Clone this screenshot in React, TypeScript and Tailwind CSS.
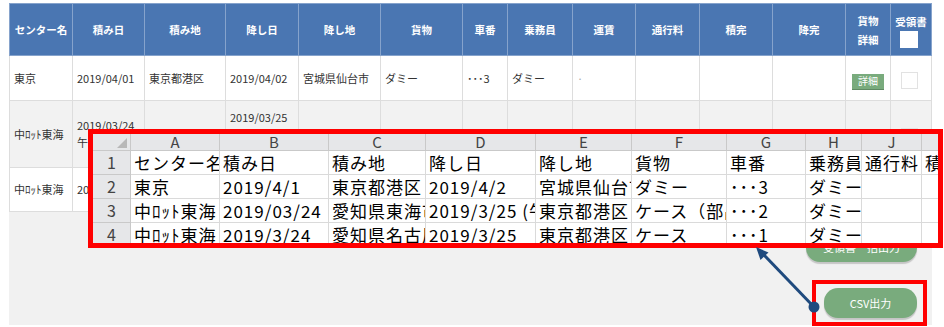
import React from 'react';

const cols = [63, 72, 81, 73, 82, 82, 45, 65, 63, 64, 73, 73, 45, 41];
const headers = ['センター名', '積み日', '積み地', '降し日', '降し地', '貨物', '車番', '乗務員', '運賃', '通行料', '積完', '降完'];

type Row = { h: string; bg: string; cells: string[] };
const rows: Row[] = [
  {
    h: 'h-[45px]',
    bg: 'bg-white',
    cells: ['東京', '2019/04/01', '東京都港区', '2019/04/02', '宮城県仙台市', 'ダミー', '･･･3', 'ダミー', '·', '', '', ''],
  },
  {
    h: 'h-[67px]',
    bg: 'bg-[#f2f2f2]',
    cells: ['中ﾛｯﾄ東海', '2019/03/24\n午前', '愛知県東海市', '2019/03/25\n午前9時\n指定', '東京都港区', 'ケース（部品）', '･･･2', 'ダミー', '10,000円', '', '', ''],
  },
  {
    h: 'h-[44px]',
    bg: 'bg-white',
    cells: ['中ﾛｯﾄ東海', '2019/03/24', '愛知県名古屋市', '2019/03/25', '東京都港区', 'ケース', '･･･1', 'ダミー', '', '', '', ''],
  },
];

const letters = ['', 'A', 'B', 'C', 'D', 'E', 'F', 'G', 'H', 'J', 'K'];
const xrows: string[][] = [
  ['センター名', '積み日', '積み地', '降し日', '降し地', '貨物', '車番', '乗務員', '通行料', '積完'],
  ['東京', '2019/4/1', '東京都港区', '2019/4/2', '宮城県仙台市', 'ダミー', '･･･3', 'ダミー', '', ''],
  ['中ﾛｯﾄ東海', '2019/03/24', '愛知県東海市', '2019/3/25 (午前)', '東京都港区', 'ケース（部品）', '･･･2', 'ダミー', '', ''],
  ['中ﾛｯﾄ東海', '2019/3/24', '愛知県名古屋市', '2019/3/25', '東京都港区', 'ケース', '･･･1', 'ダミー', '', ''],
];

function DetailButton() {
  return (
    <span className="inline-flex h-[15px] w-[32px] items-center justify-center bg-[#79ab7d] text-[10px] leading-none text-white shadow-[0_1px_0_#5f8a63]">
      詳細
    </span>
  );
}

function Check() {
  return <span className="inline-block h-[17px] w-[17px] border border-[#e2e2e2] bg-white align-middle" />;
}

function ExcelOverlay() {
  return (
    <div className="absolute left-[88px] top-[129px] h-[119px] w-[855px] border-[5px] border-[#ff0000] bg-white">
      <div
        className="h-full w-full overflow-hidden"
        style={{ fontFamily: '"Noto Sans CJK JP", "Noto Sans", sans-serif' }}
      >
        <div className="grid w-max grid-cols-[38px_89px_109px_97px_110px_96px_95px_79px_56px_60px_60px] grid-rows-[17px_24px_24px_24px_24px]">
          {letters.map((l, i) => (
            <div
              key={'h' + i}
              className="relative border-b border-r border-[#c9c9c9] bg-[#e6e7e9] text-center text-[15px] leading-[16px] text-[#444]"
            >
              {i === 0 ? (
                <span className="absolute bottom-[2px] right-[3px] h-0 w-0 border-b-[10px] border-l-[10px] border-b-[#b8b8b8] border-l-transparent" />
              ) : (
                l
              )}
            </div>
          ))}
          {xrows.map((r, ri) => (
            <React.Fragment key={'r' + ri}>
              <div className="border-b border-r border-[#c9c9c9] bg-[#e6e7e9] text-center text-[16px] leading-[23px] text-[#444]">
                {ri + 1}
              </div>
              {r.map((c, ci) => (
                <div
                  key={ci}
                  className="overflow-hidden whitespace-nowrap border-b border-r border-[#dadada] pl-[3px] text-[17px] leading-[23px] tracking-[1px] text-black"
                >
                  {c}
                </div>
              ))}
            </React.Fragment>
          ))}
        </div>
      </div>
    </div>
  );
}

export default function App() {
  return (
    <div
      className="relative h-[327px] w-[944px] overflow-hidden bg-white"
      style={{ fontFamily: '"Noto Sans CJK JP", "Noto Sans", sans-serif' }}
    >
      <div className="ml-[9px] mt-[3px] flex h-[322px] w-[923px] flex-col bg-[#f1f1f1]">
        <table className="w-[922px] table-fixed border-collapse">
          <colgroup>
            {cols.map((w, i) => (
              <col key={i} style={{ width: w }} />
            ))}
          </colgroup>
          <thead>
            <tr className="h-[52px] bg-[#4a76b2]">
              {headers.map((h) => (
                <th
                  key={h}
                  className="border border-[#86a3cc] px-0 text-center text-[10.5px] font-bold text-white"
                >
                  {h}
                </th>
              ))}
              <th className="border border-[#86a3cc] px-0 text-center text-[10.5px] font-bold leading-[19px] text-white">
                貨物
                <br />
                詳細
              </th>
              <th className="border border-[#86a3cc] px-0 pt-[2px] text-center align-middle text-[10.5px] font-bold leading-[17px] text-white">
                <div>受領書</div>
                <div className="flex justify-center">
                  <span className="mr-[4px] mt-[1px] block h-[17px] w-[18px] bg-white" />
                </div>
              </th>
            </tr>
          </thead>
          <tbody>
            {rows.map((r, ri) => (
              <tr key={ri} className={`${r.h} ${r.bg}`}>
                {r.cells.map((c, ci) => (
                  <td
                    key={ci}
                    className={`border border-[#dddddd] px-[4px] align-middle text-[11px] leading-[17px] whitespace-pre-line ${
                      c === '·' ? 'text-[#aaa]' : 'text-[#333]'
                    }`}
                  >
                    {c}
                  </td>
                ))}
                <td className="border border-[#dddddd] text-center align-middle">
                  <DetailButton />
                </td>
                <td className="border border-[#dddddd] text-center align-middle">
                  <span className="mr-[4px] inline-block">
                    <Check />
                  </span>
                </td>
              </tr>
            ))}
          </tbody>
        </table>

        <div className="flex flex-col items-end">
          <button className="mr-[15px] mt-[20px] flex h-[30px] w-[111px] items-center justify-center rounded-[14px] bg-[#79ab7d] text-[11px] text-white shadow-[0_2px_1px_rgba(0,0,0,0.18)]">
            受領書一括出力
          </button>
          <div className="mr-[5px] mt-[18px] border-[4px] border-[#ff0000] pb-[4px] pl-[8px] pr-[6px] pt-[4px]">
            <button className="flex h-[30px] w-[93px] items-center justify-center rounded-[14px] bg-[#79ab7d] text-[11px] text-white shadow-[0_2px_1px_rgba(0,0,0,0.18)]">
              CSV出力
            </button>
          </div>
        </div>
      </div>

      <ExcelOverlay />

      <svg className="pointer-events-none absolute left-0 top-0" width="944" height="327" viewBox="0 0 944 327">
        <line x1="814" y1="307" x2="764" y2="255" stroke="#1f4a7e" strokeWidth="3" />
        <polygon points="756,247 768.5,252.5 760.5,260" fill="#1f4a7e" />
        <circle cx="814" cy="307" r="5.5" fill="#1f4a7e" />
      </svg>
    </div>
  );
}
